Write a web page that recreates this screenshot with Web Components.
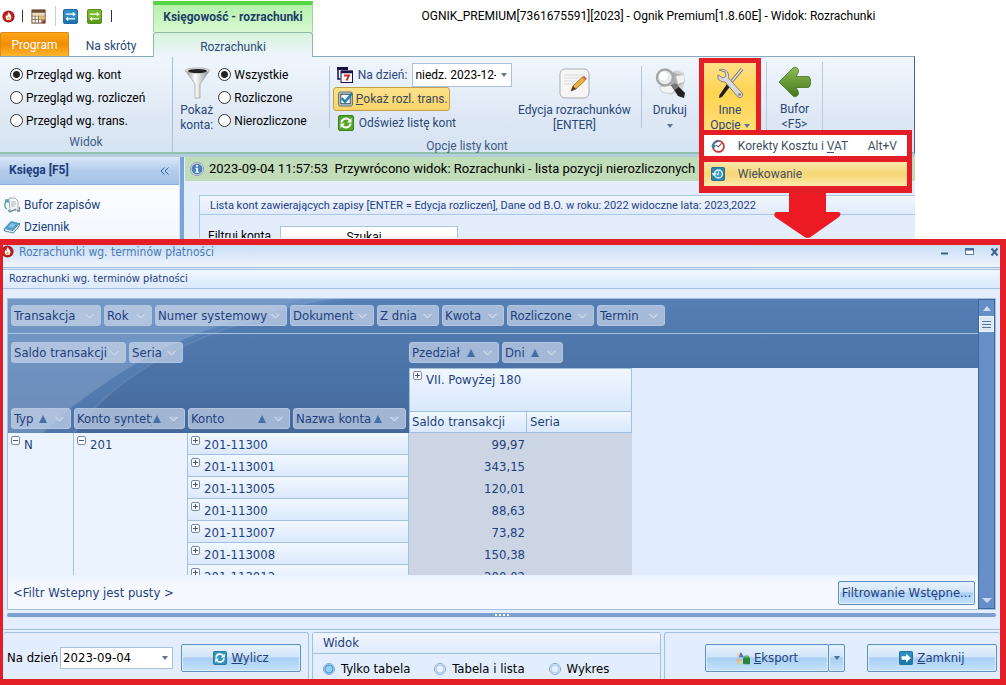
<!DOCTYPE html>
<html lang="pl">
<head>
<meta charset="utf-8">
<title>Ognik Premium - Rozrachunki</title>
<style>
html, body { margin: 0; height: 100%; }
body {
  display: flex; flex-direction: column; background: #fff; overflow: hidden;
  font: 12px/16px Roboto, "Noto Sans", sans-serif; color: #1f3f78;
  --ui: "DejaVu Sans Condensed", "Noto Sans", sans-serif;
  --red: #e31e26; --line: #a3c0e0; --ink: #1f3f7d;
}
</style>
</head>
<body>
<ognik-app></ognik-app>
<terms-dialog></terms-dialog>

<script>
const define = (name, css, html, after) => customElements.define(name, class extends HTMLElement {
  connectedCallback() {
    if (this.shadowRoot) return;
    const root = this.attachShadow({ mode: 'open' });
    const markup = typeof html === 'function' ? html(this) : html;
    root.innerHTML = `<style>*{box-sizing:border-box}button,input{font:inherit;color:inherit;margin:0}${css}</style>${markup}`;
    if (after) after(root, this);
  }
});

const ICONS = {
  flame: ['0 0 16 16', '<circle cx="8" cy="8" r="7.5" fill="#a9181c"/><circle cx="8" cy="8" r="6" fill="#c4201f"/><path d="M8.3 2.5c.4 2 3.2 3.600 3.200 6.300a3.500 3.500 0 0 1-7 0c0-1.300.7-2 1.200-2.800.3.800.7 1.100 1.100 1.200.1-1.800.4-3.200 1.500-4.700z" fill="#fff"/><path d="M8 8c1 .8 1.500 1.400 1.500 2.200a1.500 1.500 0 0 1-3 0C6.500 9.400 7.500 9 8 8z" fill="#f3a41c"/>'],
  calendar: ['0 0 16 16', '<rect x="1" y="1" width="14" height="14" fill="#fff" stroke="#5e3a25"/><rect x="1" y="1" width="14" height="3" fill="#6b4a34"/><path d="M1 7.500h14M1 11h14M4.500 4v11M8 4v11M11.500 4v11" stroke="#7c6a4d"/><rect x="2" y="4.500" width="12" height="2.500" fill="#f0dfae"/><rect x="9" y="8" width="5" height="3" fill="#e8c45a"/><rect x="12" y="12" width="3" height="3" fill="#9b2c1d"/>'],
  swapBlue: ['0 0 16 16', '<rect x=".5" y=".5" width="15" height="15" rx="1.500" fill="#2f8cc6" stroke="#176295"/><path d="M.5 10h15v5H.5z" fill="#1d75b0"/><path d="M3 4.800h7.500V3L13.500 5.500l-3 2.500V6.200H3zM13 9.800H5.500V8l-3 2.500 3 2.500v-1.800H13z" fill="#fff"/>'],
  swapGreen: ['0 0 16 16', '<rect x=".5" y=".5" width="15" height="15" rx="1.500" fill="#7ab82b" stroke="#4b8414"/><path d="M.5 10h15v5H.5z" fill="#5c9a1c"/><path d="M3 4.800h7.500V3L13.500 5.500l-3 2.500V6.200H3zM13 9.800H5.500V8l-3 2.500 3 2.500v-1.800H13z" fill="#fff"/>'],
  funnel: ['0 0 32 32', '<defs><linearGradient id="g"><stop stop-color="#8c8c8c"/><stop offset=".4" stop-color="#fff"/><stop offset="1" stop-color="#8f8f8f"/></linearGradient></defs><path d="M4.500 3.500 14 17v14h5V17l9.500-13.500z" fill="url(#g)" stroke="#999" stroke-width=".7"/><ellipse cx="16.500" cy="3.500" rx="12" ry="2.600" fill="#ddd" stroke="#999" stroke-width=".6"/><ellipse cx="16.500" cy="4" rx="9.500" ry="2" fill="#222"/>'],
  days: ['0 0 16 16', '<path d="M1 2v10h2.500" fill="none" stroke="#1b1147" stroke-width="1.500"/><path d="M0 1.500h11" stroke="#1b1147" stroke-width="3"/><rect x="4" y="4" width="11.500" height="11.500" fill="#fff" stroke="#1b1147"/><path d="M4 5h11.500" stroke="#1b1147" stroke-width="2.500"/><path d="M7 8.500h5l-2.500 5" fill="none" stroke="#d1282e" stroke-width="1.800"/>'],
  check: ['0 0 16 16', '<rect x=".5" y=".5" width="15" height="15" rx="2" fill="#b9c3c6" stroke="#5f6c70"/><rect x="3" y="3" width="10" height="10" fill="#fff" stroke="#374a52"/><path d="M4 7l3.500 4L15 2" fill="none" stroke="#2084b0" stroke-width="2.600"/>'],
  refreshGreen: ['0 0 16 16', '<rect x=".5" y=".5" width="15" height="15" rx="1.500" fill="#56a62d" stroke="#37801a"/><path d="M3.500 7.500a4.500 4.500 0 0 1 8-2.300M12.500 8.500a4.500 4.500 0 0 1-8 2.300" fill="none" stroke="#fff" stroke-width="2"/><path d="M13.500 3v4.500H9zM2.500 13V8.500H7z" fill="#fff"/>'],
  refreshBlue: ['0 0 16 16', '<rect x=".5" y=".5" width="15" height="15" rx="1.500" fill="#3194c0" stroke="#1d6c95"/><path d="M3.500 7.500a4.500 4.500 0 0 1 8-2.300M12.500 8.500a4.500 4.500 0 0 1-8 2.300" fill="none" stroke="#fff" stroke-width="2"/><path d="M13.500 3v4.500H9zM2.500 13V8.500H7z" fill="#fff"/>'],
  edit: ['0 0 32 32', '<rect x="2" y="2" width="29" height="29" rx="5" fill="#f6f6f6" stroke="#a9adb3"/><path d="M6 8h20M6 11h20M6 14h20M6 17h14" stroke="#dadada"/><path d="m13 24 2-5L24.500 10l3 3L18 22z" fill="#f0ae3c" stroke="#8d6426" stroke-width=".8"/><path d="m24.500 10 1.500-1.200 3 3-1.500 1.200z" fill="#c7665d"/><path d="m13 24 2-5 3 3z" fill="#4a3a28"/>'],
  print: ['0 0 32 32', '<path d="M13 6l10-3 7 3 1 8-2 8-12 6-10-6z" fill="#d2d4d6"/><path d="M19 5l5 2 6 1v8l-8 4-5-5z" fill="#aeb1b4"/><path d="M22 9l8-1v7l-6 2z" fill="#f2f2f2"/><path d="M5 20l9-2 9 3-6 6-9-2z" fill="#f2f2f2" stroke="#bbb" stroke-width=".6"/><path d="m17 18 5-1 9 9-1 5-6-2z" fill="#222"/><path d="m17 18 4-2 4 4-4 3z" fill="#777"/><circle cx="11" cy="10.500" r="8" fill="#e9ebec" stroke="#a4a6a8" stroke-width="2.500"/><circle cx="9.500" cy="9" r="4.500" fill="#fff"/>'],
  tools: ['0 0 32 32', '<path d="M28 2 13 20" stroke="#777" stroke-width="3.500"/><path d="M28 2 13 20" stroke="#ddd" stroke-width="1.500"/><path d="m13 17 3 2.500L8 30 5 31l.5-3z" fill="#1d1d1d"/><path d="M5 3c3-2 9 0 9.500 5 .2 1.500-.2 2.500 0 3L28 26c2 3-1.500 6-4 4L11 15c-4 0-8-2-7-7l5 3 3-2-1-4z" fill="#d9d9d9" stroke="#777" stroke-width=".9"/><circle cx="25.500" cy="27.500" r="1.300" fill="#777"/>'],
  back: ['0 0 32 32', '<defs><linearGradient id="g" x2="0" y2="1"><stop stop-color="#8cba55"/><stop offset="1" stop-color="#43791b"/></linearGradient></defs><path d="M0 16 14 2c3-2 7 1 5 5l-2 3.500h12c3.500 0 3.500 11 0 11H17l2 3.500c2 4-2 7-5 5z" fill="url(#g)" stroke="#42741f" stroke-width=".8"/>'],
  clock: ['0 0 16 16', '<circle cx="8.500" cy="8.500" r="6.300" fill="#fff" stroke="#c43b35" stroke-width="2"/><path d="M2.300 9.500A6.300 6.300 0 0 1 8.500 2.200" fill="none" stroke="#3c78b4" stroke-width="2.400"/><path d="M0 7h6l-3 4z" fill="#3c78b4"/><path d="M6 7l2.500 2L12 5" fill="none" stroke="#555" stroke-width="1.200"/>'],
  aging: ['0 0 16 16', '<rect x=".5" y=".5" width="15" height="15" rx="1.500" fill="#2d86ae" stroke="#1c6288"/><circle cx="8.500" cy="8" r="4.600" fill="#3b9cc5" stroke="#e9f6fc" stroke-width="1.500"/><path d="M8.500 5v3.500L6.500 9M1.500 7.500h4L3.500 10z" fill="#e9f6fc" stroke="#e9f6fc"/>'],
  info: ['0 0 16 16', '<circle cx="8" cy="8" r="7" fill="#4c7fc2" stroke="#d5dde8" stroke-width="1.500"/><circle cx="8" cy="8" r="7.600" fill="none" stroke="#7d8ea6" stroke-width=".8"/><circle cx="8" cy="4.300" r="1.300" fill="#fff"/><path d="M6.300 6.700h2.900V11h1.200v1.300H6V11h1.100V8H6.300z" fill="#fff"/>'],
  docs: ['0 0 16 16', '<path d="M5 1h6l3 3v9l-8 1z" fill="#f3f5f6" stroke="#a4aeb3"/><path d="M7 5h5M7 7h5M7 9h4" stroke="#b2b9be"/><path d="M4 3C0 5 0 10 3 12M1 3l3 0v3" fill="none" stroke="#5ea3ac" stroke-width="1.500"/><path d="M13 14h2.500v-4M12 12l-6 3-2-2" fill="none" stroke="#6c8e99" stroke-width="1.300"/>'],
  book: ['0 0 16 16', '<path d="m7 2 8 2-6 7-8.500-2z" fill="#4a9cc6"/><path d="M.5 9.500 9 11.500l6.500-7.500v2.500L9.500 14 .5 12z" fill="#e2edf4" stroke="#2e6f98" stroke-width=".8"/><path d="m7.500 4 4.500 1-3.500 4-4.500-1z" fill="#82c1e0"/>'],
  exportIcon: ['0 0 16 16', '<circle cx="2.500" cy="4" r="2" fill="#f3d9a5"/><path d="m5.500 1 3.500 6H3z" fill="#586bc6"/><path d="M1 9h4v5H1z" fill="#f0b078"/><path d="m1 12 5 3v-3z" fill="#e8d28c"/><rect x="8" y="7" width="8" height="8" rx="1" fill="#28883b"/><path d="M8 7h8l-2-2h-4z" fill="#63b56c"/>'],
  go: ['0 0 16 16', '<rect x=".5" y=".5" width="15" height="15" rx="1.500" fill="#2e8fbe" stroke="#1a6590"/><path d="M.5 9h15v6H.5z" fill="#1f7aab"/><path d="M3 6h5V3l5.500 5L8 13v-3H3z" fill="#fff"/>']
};

define('app-icon', ':host{display:block;flex:none;width:16px;height:16px}:host([large]){width:32px;height:32px}svg{display:block;width:100%;height:100%}',
  el => { const [box, body] = ICONS[el.getAttribute('name')]; return `<svg viewBox="${box}" aria-hidden="true">${body}</svg>`; });

define('option-list', `
:host{display:flex;flex-direction:column;color:#000}
:host([row]){flex-direction:row;font-size:13px;font-family:var(--ui);gap:24px}
label{display:flex;align-items:center;gap:3px;height:23px;white-space:nowrap}
input{appearance:none;width:13px;height:13px;border:1px solid #333;border-radius:50%;background:#fff}
input:checked{background:radial-gradient(circle,#222 0 3px,#fff 4px)}
:host([row]) label{gap:6px}
:host([row]) input{width:12px;height:12px;border-color:#7fa6d8;background:radial-gradient(circle,#e6effa 0 3px,#9bbfe6 4px,#fff 5px)}
:host([row]) input:checked{background:radial-gradient(circle,#8fd2fa 0 3px,#2f86d2 4px,#dcedff 5px)}`,
  el => el.getAttribute('options').split('|').map((t, i) => `<label><input type="radio" name="o"${i ? '' : ' checked'}><span>${t}</span></label>`).join(''));

define('date-box', `
:host{display:flex;background:#fff;border:1px solid #a9c1de;color:#000;height:22px}
input{flex:1;min-width:0;border:0;padding:0 0 0 2px;background:none;outline:0}
button{width:15px;flex:none;border:0;background:none;padding:0;display:grid;place-items:center}
i{border:3px solid transparent;border-top:4px solid #5e7590;border-bottom:0}`,
  el => `<input aria-label="${el.getAttribute('label')}" value="${el.getAttribute('value')}"><button aria-label="Rozwiń"><i></i></button>`);

define('ribbon-group', `
:host{display:flex;flex-direction:column;flex:none}
:host([ruled]){border-right:1px solid #a9bfd6}
div{display:flex;flex:1;padding-top:6px}
footer{height:20px;line-height:20px;text-align:center;color:#3e5b85}`,
  el => `<div><slot></slot></div><footer>${el.getAttribute('label') || ''}</footer>`);

define('big-button', `
:host{display:block}
button{width:100%;border:0;background:none;padding:4px 0 0;display:flex;flex-direction:column;align-items:center;gap:4px;line-height:15px;white-space:nowrap}
.t{display:block;text-align:center;color:#2b4878}
i{display:inline-block;border:3px solid transparent;border-top:4px solid #5e7590;border-bottom:0;vertical-align:middle}`,
  el => `<button><app-icon large name="${el.getAttribute('icon')}"></app-icon><span class="t"><slot></slot>${el.hasAttribute('drop') ? ' <i></i>' : ''}</span></button>`);

define('options-callout', `
:host{display:block;position:relative;width:63px;height:78px;z-index:3}
.btn{border:5px solid var(--red);border-bottom:0;height:78px;background:linear-gradient(#ffe08a,#ffd451 40%,#ffe07a)}
.menu{position:absolute;left:0;top:72px;width:213px;border:5px solid var(--red);border-bottom-width:7px;background:var(--red);z-index:1}
.menu button{display:flex;align-items:center;width:100%;border:0;padding:0 10px 0 7px;height:21px;background:#fff;color:#3f4f66}
.menu button + button{height:24px;margin-top:6px;background:linear-gradient(#f9e7ae,#f6d774 50%,#fbe9ae)}
.menu span{flex:1;text-align:left;padding-left:13px}
app-icon{width:14px;height:14px}
u{text-underline-offset:2px}
.arrow{position:absolute;left:75px;top:134px;width:67px;height:47px;display:block}`,
`<div class="btn"><big-button icon="tools" drop>Inne<br>Opcje</big-button></div>
<div class="menu" role="menu">
<button role="menuitem"><app-icon name="clock"></app-icon><span>Korekty Kosztu i <u>V</u>AT</span>Alt+V</button>
<button role="menuitem"><app-icon name="aging"></app-icon><span>Wiekowanie</span></button></div>
<svg class="arrow" viewBox="0 0 67 47" aria-hidden="true"><path d="M15 0h37v20h13q3 2 0 5L38 44q-4 4-9 0L1 25q-2-3 1-5h13z" fill="#ec1b23"/></svg>`);

define('title-area', `
:host{display:grid;grid-template:32px 24px / 153px 160px 1fr;white-space:nowrap}
.quick{display:flex;align-items:center;padding-left:2px}
.quick app-icon{margin-right:9px;width:15px;height:15px}.quick app-icon:first-child{width:13px;height:13px;margin-right:7px}
.sep{width:1px;height:12px;background:#333;margin-right:8px}.soft{height:20px;background:#c3cfdc;margin-right:7px}
.ctx{border:solid #9fd49b;border-width:0 1px;margin-top:1px;border-top:4px solid #55d546;background:linear-gradient(#b5f1ab,#d9f8d4);text-align:center;font-weight:700;color:#1d3d66;line-height:24px}
.title{color:#000;text-align:center;line-height:32px;padding-right:22px}
.tabs{display:flex}
a{text-decoration:none;text-align:center;color:#2b4a78;line-height:28px}
.prog{width:69px;color:#fff;line-height:24px;border-radius:2px 2px 0 0;background:linear-gradient(#fba51c,#f08f00 50%,#fdb52e);border:1px solid #e08a10;border-bottom:0}
.skr{flex:1}
.cur{border:solid #8fb8a6;border-width:1px 1px 0;border-radius:3px 3px 0 0;background:linear-gradient(#d6f3dc,#eef5fd);position:relative;z-index:1;margin-bottom:-1px}`,
`<div class="quick"><app-icon name="flame"></app-icon><span class="sep"></span><app-icon name="calendar"></app-icon><span class="sep soft"></span><app-icon name="swapBlue"></app-icon><app-icon name="swapGreen"></app-icon><span class="sep"></span></div>
<div class="ctx">Księgowość - rozrachunki</div>
<div class="title">OGNIK_PREMIUM[7361675591][2023] - Ognik Premium[1.8.60E] - Widok: Rozrachunki</div>
<nav class="tabs"><a class="prog" href="#">Program</a><a class="skr" href="#">Na skróty</a></nav>
<a class="cur" href="#">Rozrachunki</a>`);

define('ribbon-bar', `
:host{display:flex;height:98px;border:solid #87a9bd;border-width:1px 1px 0 0;border-right-color:#44688c;border-bottom:2px solid #8fc2ac;background:linear-gradient(#f0f6fd,#dfe9f5 60%,#d6e3f2)}
.view{width:173px}.view option-list{margin-left:10px}
.list{width:588px}
.pok{width:48px;padding-top:4px;text-align:center;line-height:15px;color:#2b4878}
.pok app-icon{margin:0 auto 4px}
.filter{width:112px;margin-left:-2px}
.rule{width:1px;height:62px;margin-top:3px;background:#b4c7dc}
.tools{width:187px;padding-left:3px;color:#2b4878}
.row{display:flex;align-items:center;gap:5px;height:24px;padding-left:4px;white-space:nowrap}
.row > span{flex:1}
div.row{width:176px}
button.row{border:1px solid transparent;background:none}
button.on{border-color:#c2a04e;border-radius:3px;background:linear-gradient(#fce28c,#fbd468);padding:0 2px 0 4px;width:117px;gap:3px;color:#3a4a5c}
button.on app-icon{width:15px}
date-box{width:100px;height:24px;margin-left:0}
.edit{width:122px;margin-right:6px}.print{width:57px}
options-callout{margin:-5px 0 0 1px}
.buf{width:57px;border:solid #bccbdd;border-width:0 1px;margin:5px 0 0 5px;height:69px}`,
`<ribbon-group class="view" label="Widok" ruled><option-list options="Przegląd wg. kont|Przegląd wg. rozliczeń|Przegląd wg. trans."></option-list></ribbon-group>
<ribbon-group class="list" label="Opcje listy kont">
<div class="pok"><app-icon large name="funnel"></app-icon>Pokaż konta:</div>
<option-list class="filter" options="Wszystkie|Rozliczone|Nierozliczone"></option-list>
<span class="rule"></span>
<div class="tools"><div class="row"><app-icon name="days"></app-icon><span>Na dzień:</span><date-box label="Na dzień" value="niedz. 2023-12-"></date-box></div>
<button class="row on"><app-icon name="check"></app-icon><span><u>P</u>okaż rozl. trans.</span></button>
<button class="row"><app-icon name="refreshGreen"></app-icon>Odśwież listę kont</button></div>
<big-button class="edit" icon="edit">Edycja rozrachunków<br>[ENTER]</big-button>
<span class="rule"></span>
<big-button class="print" icon="print" drop>Drukuj<br></big-button>
<options-callout></options-callout>
</ribbon-group>
<big-button class="buf" icon="back">Bufor<br>&lt;F5&gt;</big-button>`);

define('side-pane', `
:host{display:block;width:179px;background:linear-gradient(#fff,#f3f8ff);color:#20407c;flex:none}
h2{margin:0;height:28px;font-size:12px;line-height:26px;padding:0 10px 0 9px;display:flex;justify-content:space-between;border-bottom:1px solid #8fb0d8;background:linear-gradient(#dbe8f8,#b3ccec 50%,#a4c2e8)}
h2 button{border:0;background:none;padding:0}
h2 svg{display:block;width:9px;height:8px}
a{display:flex;gap:4px;align-items:center;height:22px;padding-left:4px;color:inherit;text-decoration:none}
nav{padding-top:9px}`,
`<h2>Księga [F5]<button aria-label="Zwiń"><svg viewBox="0 0 9 8"><path d="M4.500 .5 1 4l3.500 3.500M8.500 .5 5 4l3.500 3.500" fill="none" stroke="#3565a8"/></svg></button></h2><nav><a href="#"><app-icon name="docs"></app-icon>Bufor zapisów</a><a href="#"><app-icon name="book"></app-icon>Dziennik</a></nav>`);

define('account-list', `
:host{display:block;flex:1;min-width:0;background:#e3edfc;white-space:nowrap}
.info{height:24px;display:flex;align-items:center;gap:5px;padding-left:5px;background:#c1dcb8;color:#000;font-size:13px}
.info span{white-space:pre}
.info app-icon{width:14px;height:14px}
.panel{margin:14px 0 0 14px;border:solid #a9c8e6;border-width:1px 0 0 1px}
h3{margin:0;height:19px;line-height:20px;font-weight:400;font-size:11px;padding-left:10px;border-bottom:1px solid #a9c8e6;background:linear-gradient(#f1f6fd,#dfeafa);color:#1e3f86}
.find{height:23px;overflow:hidden;padding:11px 0 0 8px;color:#000}
label{display:flex;line-height:20px}
label span{width:72px}
input{width:178px;height:21px;border:1px solid #a9c4e4;text-align:center;padding:0 10px 0 0}
input::placeholder{color:#000;opacity:1}`,
`<div class="info"><app-icon name="info"></app-icon><span>2023-09-04 11:57:53  Przywrócono widok: Rozrachunki - lista pozycji nierozliczonych</span></div>
<div class="panel"><h3>Lista kont zawierających zapisy [ENTER = Edycja rozliczeń], Dane od B.O. w roku: 2022 widoczne lata: 2023,2022</h3>
<div class="find"><label><span>Filtruj konta</span><input placeholder="Szukaj"></label></div></div>`);

define('ognik-app', `
:host{display:block;flex:none}
ribbon-bar,main{width:91%}
main{display:flex;border-top:3px solid #b4cfdb;height:85px;overflow:hidden;background:#e3edfc}
.split{flex:none;width:5px;background:#7ba3d9;border:solid #d5e4f7;border-width:0 0 0 1px;margin-right:1px}`,
`<title-area></title-area><ribbon-bar></ribbon-bar><main><side-pane></side-pane><span class="split"></span><account-list></account-list></main>`);

define('field-chip', `
:host{display:block;flex:none}
button{display:flex;align-items:center;width:100%;height:21px;border:1px solid #b3c6e0;border-radius:3px;background:rgba(205,217,236,.68);padding:0 6px 0 2px;text-align:left;color:var(--ink);line-height:18px}
span{flex:1;overflow:hidden;white-space:nowrap}
i{border:4px solid transparent;border-bottom:8px solid #456fa8;border-top:0;margin:0 8px 0 1px}
svg{width:9px;height:6px;flex:none;display:block}`,
  el => `<button><span><slot></slot></span>${el.hasAttribute('sorted') ? '<i></i>' : ''}<svg viewBox="0 0 9 6"><path d="M0 .5h9L4.500 5z" fill="#aebfdb"/><path d="M.5 1l4 4 4-4" fill="none" stroke="#dfe8f5"/></svg></button>`,
  (r, el) => { el.style.width = el.getAttribute('w') + 'px'; });

define('fold-box', `
:host{display:inline-block;vertical-align:4px;margin-right:4px}
button{display:block;width:9px;height:9px;border:1px solid #7b89a8;border-radius:2px;background:#fff;padding:0}
svg{display:block;width:7px;height:7px}`,
  el => `<button aria-label="Rozwiń"><svg viewBox="0 0 7 7"><path d="M1 3.500h5${el.hasAttribute('open') ? '' : 'M3.500 1v5'}" stroke="#47577c"/></svg></button>`);

define('glossy-button', `
:host{display:flex;height:28px}
button{flex:1;display:flex;align-items:center;justify-content:center;gap:4px;border:1px solid #5f8fc3;border-radius:2px;padding:0;white-space:nowrap;color:var(--ink);
background:linear-gradient(#e9f3fd,#d0e4f9 45%,#a9cff4 50%,#c4e2fc);box-shadow:inset 0 0 0 1px #e0effc}
.drop{flex:none;width:17px;margin-left:-1px}
i{border:3px solid transparent;border-top:4px solid #47719f;border-bottom:0}
app-icon{width:14px;height:14px}`,
  el => `<button>${el.hasAttribute('icon') ? `<app-icon name="${el.getAttribute('icon')}"></app-icon>` : ''}<span><slot></slot></span></button>${el.hasAttribute('drop') ? '<button class="drop" aria-label="Więcej"><i></i></button>' : ''}`);

const ROWS = [['201-11300','99,97'],['201-113001','343,15'],['201-113005','120,01'],['201-11300','88,63'],['201-113007','73,82'],['201-113008','150,38'],['201-113012','200,02']];
const chips = list => `<div class="chips">${list.map(([t, w, s]) => `<field-chip w="${w}"${s ? ' sorted' : ''}>${t}</field-chip>`).join('')}</div>`;

define('pivot-grid', `
:host{display:flex;flex:1;min-height:0;border:1px solid var(--line);background:#e1ecfd}
.main{flex:1;min-width:0;display:flex;flex-direction:column}
.view{flex:1;min-height:0;overflow:hidden;position:relative}
.decor{position:absolute;left:0;top:0;width:100%;height:134px;background:linear-gradient(#557fb5,#44699c)}
.decor svg{display:block;width:600px;height:134px}
.body{position:relative}
.chips{display:flex;gap:3px}
.filters{padding:6px 0 7px 3px;border-bottom:1px solid #a9c3e3}
table{border-spacing:0;table-layout:fixed;width:100%;color:var(--ink)}
td,th{padding:0;font-weight:400;text-align:left;vertical-align:top;height:22px}
thead tr:first-child th{height:34px;padding:8px 0 0 3px;vertical-align:top}
thead tr:first-child th + th{padding-left:0}
.dim{vertical-align:bottom;padding:0 0 4px}.dim:first-child{padding-left:3px}
.col,.m{border:solid var(--line);border-width:1px 1px 0 0;background:linear-gradient(#f0f7ff,#d9e8fb);padding-left:3px;line-height:22px}
.col{height:43px;border-left-width:1px}
.m{border-bottom-width:1px;line-height:20px}.m1{border-left-width:1px;padding-left:2px}
.blank{background:#e1ecfd}
td{border:solid var(--line);border-width:0 1px 1px 0;padding:2px 0 0 3px;line-height:19px}
.t{background:#eaf3fe}
.k{background:linear-gradient(#f1f8ff,#dbe9fc)}
.v,.e{background:#cbd5e3;border-color:transparent}
.v{text-align:right;padding-right:1px}
.r{border-color:transparent;padding:0}
footer{flex:none;height:34px;display:flex;align-items:center;justify-content:space-between;padding:2px 3px 0 5px;background:linear-gradient(#e9f2fe,#f5f9ff 30%);color:var(--ink)}
footer glossy-button{width:137px;height:24px}
.scroll{width:17px;flex:none;background:#668fc8;border:1px solid #3d669f;display:flex;flex-direction:column;align-items:center}
.scroll button{border:0;background:none;padding:0;height:16px;width:100%;display:grid;place-items:center}
.up{border:4px solid transparent;border-bottom:5px solid #c9dbf3;border-top:0}
.down{border:5px solid transparent;border-top:5px solid #c9dbf3;border-bottom:0}
.thumb{width:15px;height:16px;border:1px solid #eef5fd;background:repeating-linear-gradient(#54749f 0 1px,#dce8f5 1px 3px) content-box,#dce8f5;padding:4px 2px 2px}
.grow{flex:1}`,
`<div class="main"><div class="view">
<div class="decor"><svg viewBox="0 0 600 134" aria-hidden="true"><path d="M0 0H325Q255 12 192 34C140 54 110 74 64 108L35 134H0z" fill="#fff" opacity=".14"/><path d="M0 0H295Q235 14 186 36C135 58 100 82 64 108L35 134H0z" fill="#fff" opacity=".07"/><path d="M0 0H340Q265 12 196 36C150 54 95 92 66 134H0z" fill="#6f9bd4" opacity=".25"/><path d="M270 14Q225 26 196 38C150 56 95 92 66 134" fill="none" stroke="#fff" stroke-width="2" opacity=".1"/></svg></div>
<div class="body"><div class="filters">${chips([['Transakcja',90],['Rok',48],['Numer systemowy',132],['Dokument',84],['Z dnia',62],['Kwota',62],['Rozliczone',87],['Termin',68]])}</div>
<table><colgroup><col style="width:66px"><col style="width:114px"><col style="width:221px"><col style="width:118px"><col style="width:105px"><col></colgroup>
<thead><tr><th colspan="3">${chips([['Saldo transakcji',115],['Seria',54]])}</th><th colspan="3">${chips([['Pzedział',90,1],['Dni',61,1]])}</th></tr>
<tr><th class="dim" rowspan="2">${chips([['Typ',60,1]])}</th><th class="dim" rowspan="2">${chips([['Konto syntetyczne',111,1]])}</th><th class="dim" rowspan="2">${chips([['Konto',102,1],['Nazwa konta',113,1]])}</th>
<th class="col" colspan="2"><fold-box></fold-box>VII. Powyżej 180</th><th class="blank" rowspan="2"></th></tr>
<tr><th class="m m1">Saldo transakcji</th><th class="m">Seria</th></tr></thead>
<tbody>${ROWS.map(([k, v], i) => `<tr>${i ? '' : '<td class="t" rowspan="7"><fold-box open></fold-box>N</td><td class="t" rowspan="7"><fold-box open></fold-box>201</td>'}<td class="k"><fold-box></fold-box>${k}</td><td class="v">${v}</td><td class="e"></td><td class="r"></td></tr>`).join('')}</tbody></table></div></div>
<footer><span>&lt;Filtr Wstepny jest pusty &gt;</span><glossy-button>Filtrowanie Wstępne...</glossy-button></footer></div>
<div class="scroll"><button aria-label="W górę"><i class="up"></i></button><span class="thumb"></span><span class="grow"></span><button aria-label="W dół"><i class="down"></i></button></div>`);

define('dialog-footer', `
:host{display:grid;grid-template-columns:307fr 350fr 337fr;gap:3px;height:50px;border-top:1px solid var(--line);padding-top:2px;flex:none}
section{border:1px solid var(--line);border-bottom:0;border-radius:3px 3px 0 0;min-width:0}
.date{display:flex;align-items:center;padding:3px 7px 0 4px;color:#000;border-left:0}
.date date-box{width:113px;margin:0 8px 0 2px}.date glossy-button{flex:1}
h3{margin:0;font-weight:400;font-size:13px;line-height:20px;padding-left:10px;border-bottom:1px solid var(--line);background:linear-gradient(#f1f6fe,#deebfb)}
option-list{padding:3px 0 0 10px}
.act{display:flex;justify-content:space-between;align-items:center;padding:3px 3px 0 40px;border-right:0}
.x{width:140px}.z{width:130px}`,
`<section class="date"><span>Na dzień</span><date-box label="Na dzień" value="2023-09-04"></date-box><glossy-button icon="refreshBlue"><u>W</u>ylicz</glossy-button></section>
<section><h3>Widok</h3><option-list row options="Tylko tabela|Tabela i lista|Wykres"></option-list></section>
<section class="act"><glossy-button class="x" icon="exportIcon" drop><u>E</u>ksport</glossy-button><glossy-button class="z" icon="go"><u>Z</u>amknij</glossy-button></section>`);

define('terms-dialog', `
:host{display:flex;flex-direction:column;flex:1;min-height:0;border:6px solid var(--red);border-left-width:3px;background:#e2edfd;box-sizing:border-box;font:13px/16px var(--ui);color:var(--ink);overflow:hidden}
header{display:flex;align-items:center;height:23px;flex:none;border-bottom:1px solid #9dbbe0;background:linear-gradient(#c9ddf6,#f0f6fe);color:#4a7ab5;font-size:12px;padding-bottom:9px}
header app-icon{width:13px;height:13px;margin:0 5px 0 -2px}
header b{flex:1;font-weight:400}
header button{border:0;background:none;padding:0;margin-left:14px;width:11px;height:10px}
header svg{display:block;width:11px;height:10px}
h2{margin:1px 0 0;flex:none;height:20px;font-size:11px;font-weight:400;line-height:18px;padding-left:6px;border:solid var(--line);border-width:1px 0;background:linear-gradient(#f0f7ff,#dbe9fc)}
.body{flex:1;min-height:0;display:flex;flex-direction:column;padding:9px 4px 0}
.split{height:4px;border-radius:2px;background:#7ba0d0;margin:3px 0 12px;flex:none;display:grid;place-items:center}
.split i{width:14px;height:2px;background:repeating-linear-gradient(90deg,#fff 0 2px,transparent 2px 4px)}`,
`<header><app-icon name="flame"></app-icon><b>Rozrachunki wg. terminów płatności</b>
<button aria-label="Minimalizuj"><svg viewBox="0 0 11 10"><path d="M2 6.500h7" stroke="#3f6294" stroke-width="2"/></svg></button>
<button aria-label="Maksymalizuj"><svg viewBox="0 0 11 10"><rect x="1.500" y="1.500" width="8" height="6" fill="#fff" stroke="#5b7cab"/><path d="M1 2.500h9" stroke="#3f6294" stroke-width="2"/></svg></button>
<button aria-label="Zamknij"><svg viewBox="0 0 11 10"><path d="M2.500 1.500l6 7M8.500 1.500l-6 7" stroke="#3f6294" stroke-width="2"/></svg></button></header>
<h2>Rozrachunki wg. terminów płatności</h2>
<div class="body"><pivot-grid></pivot-grid><div class="split"><i></i></div></div>
<dialog-footer></dialog-footer>`);
</script>
</body>
</html>
